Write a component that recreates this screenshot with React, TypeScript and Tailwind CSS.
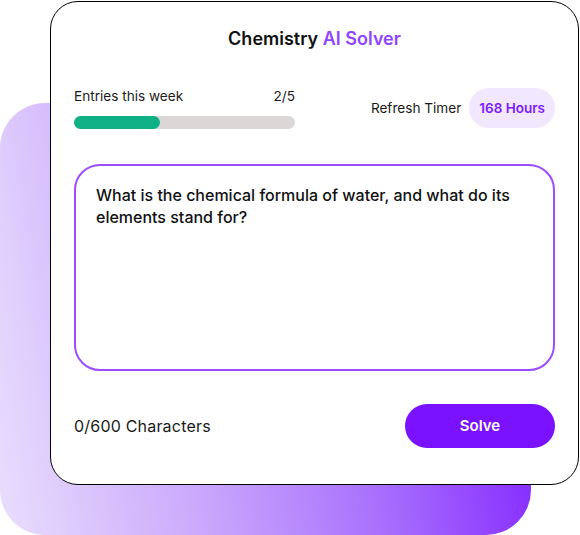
export default function App() {
  return (
    <div className="relative w-[580px] h-[535px] bg-white overflow-hidden font-['Inter',sans-serif]">
      {/* background gradient block */}
      <div className="absolute left-0 top-[103px] w-[531px] h-[432px] rounded-[45px] bg-[linear-gradient(80deg,#e9defd_0%,#c9a6fc_35%,#a66cfd_65%,#7a14ff_100%)]" />

      {/* main card */}
      <div className="relative ml-[50px] mt-px w-[529px] h-[484px] rounded-[28px] border border-black bg-white px-[23px] pt-[23px]">
        <h1 className="text-center text-[18px] leading-[28px] font-semibold text-[#111]">
          Chemistry <span className="text-[#8f45ff]">AI Solver</span>
        </h1>

        <div className="mt-[34px] flex items-center justify-between">
          <div className="w-[221px]">
            <div className="flex justify-between text-[13.6px] leading-[18px] text-[#1a1a1a]">
              <span>Entries this week</span>
              <span>2/5</span>
            </div>
            <div className="mt-[11px] h-[13px] rounded-full bg-[#dcd7d7]">
              <div className="h-full w-[39%] rounded-full bg-[#10b087]" />
            </div>
          </div>
          <div className="flex items-center gap-[8px]">
            <span className="text-[13.6px] text-[#1a1a1a]">Refresh Timer</span>
            <span className="flex h-[40px] items-center rounded-full bg-[#f1e8ff] px-[10px] text-[13.5px] font-semibold text-[#7c1aff]">
              168 Hours
            </span>
          </div>
        </div>

        <div className="mt-[35px] h-[207px] rounded-[26px] border-2 border-[#9b4dff] px-5 pt-[18px]">
          <p className="text-[16px] leading-[22px] font-medium text-[#111]">
            What is the chemical formula of water, and what do its elements stand for?
          </p>
        </div>

        <div className="mt-[33px] flex items-center justify-between">
          <span className="text-[16px] tracking-[0.2px] text-[#1a1a1a]">0/600 Characters</span>
          <button className="h-[44px] w-[150px] rounded-full bg-[#7a12ff] text-[15px] font-semibold text-white">
            Solve
          </button>
        </div>
      </div>
    </div>
  );
}
